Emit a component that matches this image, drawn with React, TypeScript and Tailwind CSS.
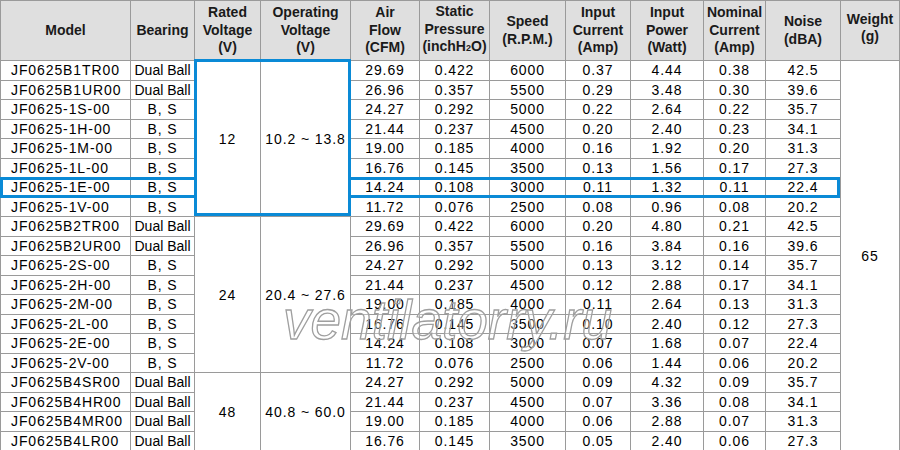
import React from "react";

const COLS = [130, 64, 66, 90, 69, 70, 76, 65, 73, 62, 75, 59];

const ROWS: string[][] = [
  ["JF0625B1TR00", "Dual Ball", "29.69", "0.422", "6000", "0.37", "4.44", "0.38", "42.5"],
  ["JF0625B1UR00", "Dual Ball", "26.96", "0.357", "5500", "0.29", "3.48", "0.30", "39.6"],
  ["JF0625-1S-00", "B, S", "24.27", "0.292", "5000", "0.22", "2.64", "0.22", "35.7"],
  ["JF0625-1H-00", "B, S", "21.44", "0.237", "4500", "0.20", "2.40", "0.23", "34.1"],
  ["JF0625-1M-00", "B, S", "19.00", "0.185", "4000", "0.16", "1.92", "0.20", "31.3"],
  ["JF0625-1L-00", "B, S", "16.76", "0.145", "3500", "0.13", "1.56", "0.17", "27.3"],
  ["JF0625-1E-00", "B, S", "14.24", "0.108", "3000", "0.11", "1.32", "0.11", "22.4"],
  ["JF0625-1V-00", "B, S", "11.72", "0.076", "2500", "0.08", "0.96", "0.08", "20.2"],
  ["JF0625B2TR00", "Dual Ball", "29.69", "0.422", "6000", "0.20", "4.80", "0.21", "42.5"],
  ["JF0625B2UR00", "Dual Ball", "26.96", "0.357", "5500", "0.16", "3.84", "0.16", "39.6"],
  ["JF0625-2S-00", "B, S", "24.27", "0.292", "5000", "0.13", "3.12", "0.14", "35.7"],
  ["JF0625-2H-00", "B, S", "21.44", "0.237", "4500", "0.12", "2.88", "0.17", "34.1"],
  ["JF0625-2M-00", "B, S", "19.00", "0.185", "4000", "0.11", "2.64", "0.13", "31.3"],
  ["JF0625-2L-00", "B, S", "16.76", "0.145", "3500", "0.10", "2.40", "0.12", "27.3"],
  ["JF0625-2E-00", "B, S", "14.24", "0.108", "3000", "0.07", "1.68", "0.07", "22.4"],
  ["JF0625-2V-00", "B, S", "11.72", "0.076", "2500", "0.06", "1.44", "0.06", "20.2"],
  ["JF0625B4SR00", "Dual Ball", "24.27", "0.292", "5000", "0.09", "4.32", "0.09", "35.7"],
  ["JF0625B4HR00", "Dual Ball", "21.44", "0.237", "4500", "0.07", "3.36", "0.08", "34.1"],
  ["JF0625B4MR00", "Dual Ball", "19.00", "0.185", "4000", "0.06", "2.88", "0.07", "31.3"],
  ["JF0625B4LR00", "Dual Ball", "16.76", "0.145", "3500", "0.05", "2.40", "0.06", "27.3"],
];

// rated / operating voltage groups, keyed by first row index
const GROUPS: Record<number, { rated: string; op: string; span: number }> = {
  0: { rated: "12", op: "10.2 ~ 13.8", span: 8 },
  8: { rated: "24", op: "20.4 ~ 27.6", span: 8 },
  16: { rated: "48", op: "40.8 ~ 60.0", span: 4 },
};

const th = "border border-[#9a9a9a] bg-[#dfdfdf] p-0 font-bold text-[14px] leading-[17.5px] text-[#1a1a1a] align-middle text-center";
const td = "border border-[#9a9a9a] p-0 h-[19.5px] text-[14px] leading-[18px] tracking-[0.9px] text-black text-center align-middle whitespace-nowrap";
const frame = "absolute border-[3px] border-[#0a8ad6] pointer-events-none";

export default function App() {
  return (
    <div className="relative w-[900px] h-[450px] overflow-hidden bg-white font-['Liberation_Sans',Arial,sans-serif]">
      <table className="table-fixed border-collapse w-[899px]">
        <colgroup>
          {COLS.map((w, i) => (
            <col key={i} style={{ width: w }} />
          ))}
        </colgroup>
        <thead>
          <tr className="h-[60px]">
            <th className={th}>Model</th>
            <th className={th}>Bearing</th>
            <th className={th}>Rated<br />Voltage<br />(V)</th>
            <th className={th}>Operating<br />Voltage<br />(V)</th>
            <th className={th}>Air<br />Flow<br />(CFM)</th>
            <th className={th}>
              Static<br />Pressure<br />(inchH<span className="text-[9px]">2</span>O)
            </th>
            <th className={th}>Speed<br />(R.P.M.)</th>
            <th className={th}>Input<br />Current<br />(Amp)</th>
            <th className={th}>Input<br />Power<br />(Watt)</th>
            <th className={th}>Nominal<br />Current<br />(Amp)</th>
            <th className={th}>Noise<br />(dBA)</th>
            <th className={th + " pb-[5px]"}>Weight<br />(g)</th>
          </tr>
        </thead>
        <tbody>
          {ROWS.map((r, i) => {
            const g = GROUPS[i];
            return (
              <tr key={r[0]}>
                <td className={td + " text-left pl-[10px]"}>{r[0]}</td>
                <td className={td + (r[1] === "Dual Ball" ? " tracking-normal" : "")}>{r[1]}</td>
                {g && (
                  <>
                    <td rowSpan={g.span} className={td}>{g.rated}</td>
                    <td rowSpan={g.span} className={td + " tracking-[0.4px]"}>{g.op}</td>
                  </>
                )}
                {r.slice(2).map((v, j) => (
                  <td key={j} className={td}>{v}</td>
                ))}
                {i === 0 && (
                  <td rowSpan={20} className={td}>65</td>
                )}
              </tr>
            );
          })}
        </tbody>
      </table>

      {/* blue highlight frames */}
      <div className={frame + " left-[194px] top-[59px] w-[157px] h-[157px]"} />
      <div className={frame + " left-0 top-[177px] w-[197px] h-[21px]"} />
      <div className={frame + " left-[348px] top-[177px] w-[492px] h-[21px]"} />

      {/* watermark */}
      <div className="absolute left-[283px] top-[293px] text-[55px] leading-none italic text-[rgba(255,255,255,0.3)] [-webkit-text-stroke:1.3px_#9f9f9f] pointer-events-none whitespace-nowrap">
        ventilatorry.ru
      </div>
    </div>
  );
}
